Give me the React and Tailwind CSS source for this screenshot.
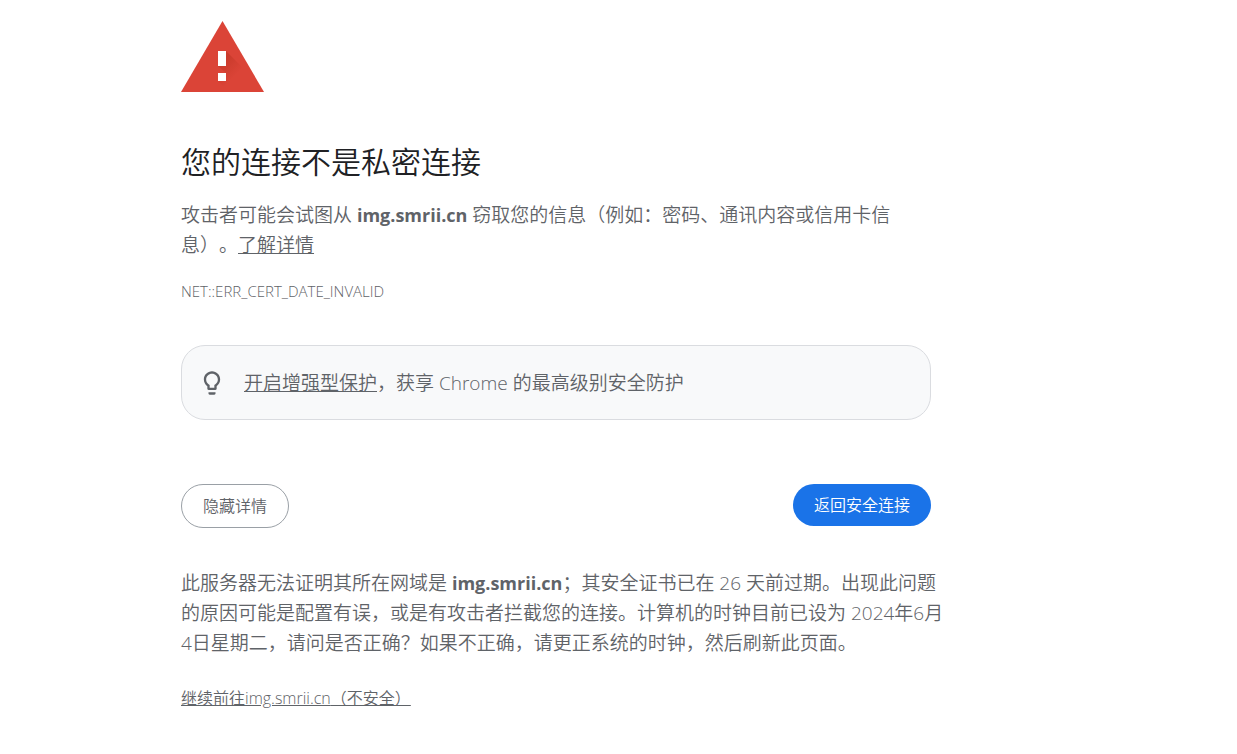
import React, { useState } from "react";

const HOST = "img.smrii.cn";

function WarningIcon() {
  return (
    <svg width="83" height="71" viewBox="0 0 83 71" className="block" aria-hidden="true">
      <defs>
        <linearGradient id="shade" x1="45" y1="38" x2="58" y2="51" gradientUnits="userSpaceOnUse">
          <stop offset="0" stopColor="#b93221" stopOpacity="0.5" />
          <stop offset="1" stopColor="#b93221" stopOpacity="0" />
        </linearGradient>
      </defs>
      <path d="M41.5 0 83 71H0z" fill="#db4437" />
      <path d="M45 30 72 57V71H48L37 60H45V52L37 45H45z" fill="url(#shade)" />
      <path d="M37 30h8v15h-8zM37 52h8v8h-8z" fill="#fff" />
    </svg>
  );
}

function BulbIcon() {
  return (
    <svg width="28" height="28" viewBox="0 0 24 24" fill="#5f6368" className="shrink-0" aria-hidden="true">
      <path d="M9 21c0 .5.4 1 1 1h4c.6 0 1-.5 1-1v-1H9v1zm3-19C8.1 2 5 5.1 5 9c0 2.4 1.2 4.5 3 5.7V17c0 .5.4 1 1 1h6c.6 0 1-.5 1-1v-2.3c1.8-1.3 3-3.4 3-5.7 0-3.9-3.1-7-7-7zm2.9 11.1-.9.6V16h-4v-2.3l-.9-.6C7.8 12.2 7 10.6 7 9c0-2.8 2.2-5 5-5s5 2.2 5 5c0 1.6-.8 3.2-2.1 4.1z" />
    </svg>
  );
}

function Host() {
  return <strong className="text-lg leading-none font-bold">{HOST}</strong>;
}

function App() {
  const [showDetails, setShowDetails] = useState(true);

  return (
    <div className="min-h-screen bg-white px-6 pt-[21px] pb-10 lg:pl-[181px] text-[#5f6368] text-[19px] leading-[30px] font-[350] font-['Open_Sans','Noto_Sans_CJK_SC',sans-serif] [text-spacing-trim:space-all]">
      <main lang="zh-CN" className="w-full max-w-[750px]">
        <WarningIcon />

        <h1 className="mt-[51px] text-3xl leading-[37px] font-[350] text-[#202124]">
          您的连接不是私密连接
        </h1>

        <p className="mt-5 lg:whitespace-nowrap">
          攻击者可能会试图从 <Host /> 窃取您的信息（例如：密码、通讯内容或信用卡信
          <br className="hidden lg:block" />
          息）。<a href="#learn-more" className="underline">了解详情</a>
        </p>

        <div className="mt-[21px] text-[15px] leading-5">NET::ERR_CERT_DATE_INVALID</div>

        <div className="mt-11 flex min-h-[75px] items-center gap-[18px] rounded-3xl border border-[#dadce0] bg-[#f8f9fa] px-4 py-5">
          <BulbIcon />
          <p>
            <a href="#enhanced-protection" className="underline">开启增强型保护</a>，获享 Chrome 的最高级别安全防护
          </p>
        </div>

        <div className="mt-16 flex items-start justify-between gap-4">
          <button
            type="button"
            onClick={() => setShowDetails(!showDetails)}
            className="cursor-pointer rounded-full border border-[#9aa0a6] bg-white px-[21px] py-[10px] text-base leading-[22px] font-[350]"
          >
            {showDetails ? "隐藏详情" : "高级"}
          </button>
          <button
            type="button"
            className="cursor-pointer rounded-full bg-[#1a73e8] px-[21px] py-[10px] text-base leading-[22px] font-[350] text-white"
          >
            返回安全连接
          </button>
        </div>

        {showDetails && (
          <div className="mt-10">
            <p className="lg:whitespace-nowrap">
              此服务器无法证明其所在网域是 <Host />；其安全证书已在 26 天前过期。出现此问题
              <br className="hidden lg:block" />
              的原因可能是配置有误，或是有攻击者拦截您的连接。计算机的时钟目前已设为 2024年6月
              <br className="hidden lg:block" />
              4日星期二，请问是否正确？如果不正确，请更正系统的时钟，然后刷新此页面。
            </p>
            <p className="mt-7 text-base leading-6">
              <a href="#proceed" className="underline">继续前往{HOST}（不安全）</a>
            </p>
          </div>
        )}
      </main>
    </div>
  );
}

export default App;
